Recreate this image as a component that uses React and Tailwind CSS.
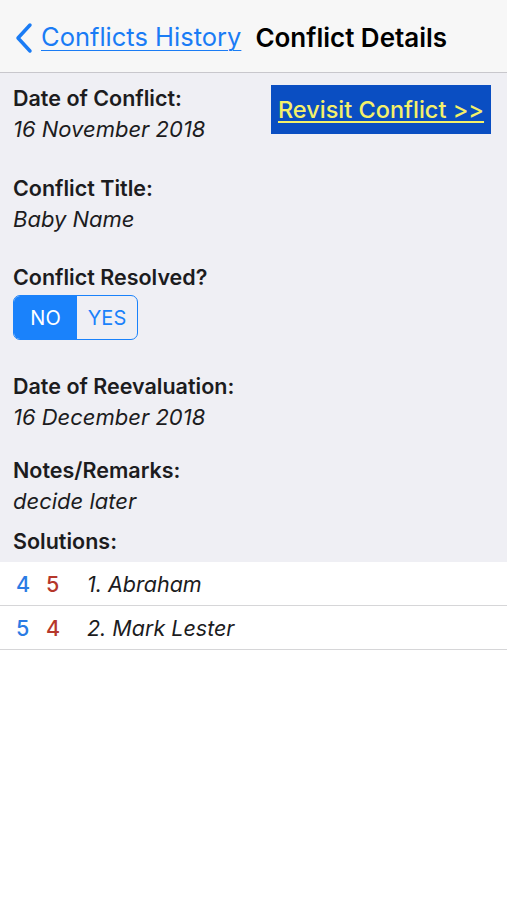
import React from "react";

const SOLUTIONS = [
  { a: 4, b: 5, name: "1. Abraham" },
  { a: 5, b: 4, name: "2. Mark Lester" },
];

const Field = ({ label, value, className = "" }) => (
  <div className={className}>
    <div className="font-semibold text-[21.5px] leading-[30px] text-[#1c1c1e]">{label}</div>
    <div className="italic text-[22px] leading-[30px] mt-px text-[#1c1c1e]">{value}</div>
  </div>
);

export default function App() {
  return (
    <div
      className="min-h-[900px] bg-white"
      style={{ fontFamily: "Inter, 'Noto Sans', sans-serif" }}
    >
      <div className="h-[73px] bg-[#f7f7f7] border-b border-[#c8c7cc] flex items-center pl-[13px] pt-[3px]">
        <svg width="22" height="32" viewBox="0 0 22 32" className="mr-[6px]">
          <path d="M17 3 L5 16 L17 29" fill="none" stroke="#1a7cf5" strokeWidth="3.5" strokeLinecap="round" strokeLinejoin="round" />
        </svg>
        <span className="text-[25.5px] text-[#1a7cf5] underline underline-offset-4 decoration-1">Conflicts History</span>
        <span className="ml-[14px] text-[26px] font-semibold text-black">Conflict Details</span>
      </div>

      <div className="bg-[#efeff4] pl-[13px] pt-[10px] pb-[6px]">
        <div className="flex justify-between pr-[16px]">
          <Field label="Date of Conflict:" value="16 November 2018" />
          <div className="mt-[2px] h-[49px] w-[220px] bg-[#0a4ec2] flex items-center justify-center">
            <span className="text-[23.5px] font-medium text-[#f4f06a] underline underline-offset-3 decoration-2">Revisit Conflict &gt;&gt;</span>
          </div>
        </div>
        <Field className="mt-[29px]" label="Conflict Title:" value="Baby Name" />
        <div className="mt-[28px]">
          <div className="font-semibold text-[21.5px] leading-[30px] text-[#1c1c1e]">Conflict Resolved?</div>
          <div className="mt-[3px] flex w-[125px] h-[45px] rounded-[7px] border border-[#1a82fb] overflow-hidden text-[20px]">
            <div className="w-[63px] bg-[#1a82fb] text-white flex items-center justify-center">NO</div>
            <div className="flex-1 text-[#1a82fb] flex items-center justify-center">YES</div>
          </div>
        </div>
        <Field className="mt-[31px]" label="Date of Reevaluation:" value="16 December 2018" />
        <Field className="mt-[23px]" label="Notes/Remarks:" value="decide later" />
        <div className="mt-[10px] font-semibold text-[21.5px] leading-[30px] text-[#1c1c1e]">Solutions:</div>
      </div>

      <div>
        {SOLUTIONS.map((s) => (
          <div key={s.name} className="h-[44px] border-b border-[#d6d6d8] flex items-center pl-[16px] pt-px text-[21.5px]">
            <span className="w-[30px] text-[#2a7be4] font-medium">{s.a}</span>
            <span className="w-[41px] text-[#b5372b] font-medium">{s.b}</span>
            <span className="italic text-[#1c1c1e]">{s.name}</span>
          </div>
        ))}
      </div>
    </div>
  );
}
